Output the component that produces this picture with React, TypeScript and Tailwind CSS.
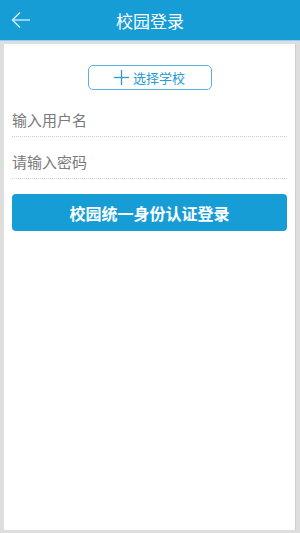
import React from "react";

export default function App() {
  return (
    <div className="w-[300px] h-[533px] flex flex-col bg-[#dedede]" style={{ fontFamily: '"Noto Sans CJK SC", "Noto Sans", sans-serif' }}>
      <div className="h-[40px] bg-[#179dd6] flex items-center relative shrink-0">
        <svg className="absolute left-[11px] top-[11px]" width="20" height="18" viewBox="0 0 20 18" fill="none" stroke="#d8f0fb" strokeWidth="1.3">
          <path d="M19 9H1.5" />
          <path d="M9 1.5L1.5 9L9 16.5" />
        </svg>
        <div className="w-full text-center text-white text-[17px] leading-none">校园登录</div>
      </div>
      <div className="h-[1px] bg-[#8fd0ee] shrink-0" />
      <div className="flex-1 flex pl-[4px] pr-[4px] pt-[3px] pb-[3px]">
        <div className="flex-1 bg-white flex flex-col px-[8px] border-r border-[#cfcfcf]">
          <div className="flex justify-center pt-[21px]">
            <div className="w-[124px] h-[25px] border-[1.5px] border-[#5ab3df] rounded-[5px] flex items-center justify-center gap-[4px] text-[#2a9ad3] text-[13px] leading-none">
              <svg width="15" height="15" viewBox="0 0 15 15" stroke="#2a9ad3" strokeWidth="1.3">
                <path d="M0 7.5H15" />
                <path d="M7.5 0V15" />
              </svg>
              <span>选择学校</span>
            </div>
          </div>
          <div className="h-[42px] mt-[5px] pt-[10px] flex items-center text-[#7a7a7a] text-[15px] border-b border-dotted border-[#cfcfcf]">输入用户名</div>
          <div className="h-[42px] pt-[10px] flex items-center text-[#7a7a7a] text-[15px] border-b border-dotted border-[#cfcfcf]">请输入密码</div>
          <div className="mt-[15px] h-[37px] bg-[#179dd6] rounded-[4px] flex items-center justify-center text-white text-[16px] font-bold">校园统一身份认证登录</div>
        </div>
      </div>
    </div>
  );
}
